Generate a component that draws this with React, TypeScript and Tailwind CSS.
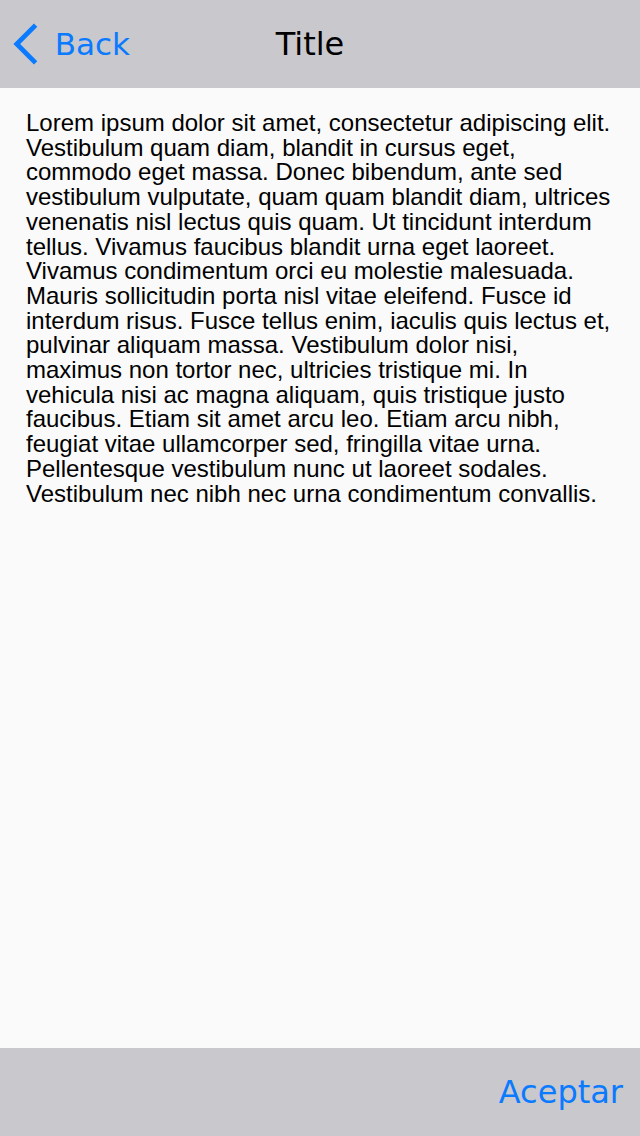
const text =
  "Lorem ipsum dolor sit amet, consectetur adipiscing elit. Vestibulum quam diam, blandit in cursus eget, commodo eget massa. Donec bibendum, ante sed vestibulum vulputate, quam quam blandit diam, ultrices venenatis nisl lectus quis quam. Ut tincidunt interdum tellus. Vivamus faucibus blandit urna eget laoreet. Vivamus condimentum orci eu molestie malesuada. Mauris sollicitudin porta nisl vitae eleifend. Fusce id interdum risus. Fusce tellus enim, iaculis quis lectus et, pulvinar aliquam massa. Vestibulum dolor nisi, maximus non tortor nec, ultricies tristique mi. In vehicula nisi ac magna aliquam, quis tristique justo faucibus. Etiam sit amet arcu leo. Etiam arcu nibh, feugiat vitae ullamcorper sed, fringilla vitae urna. Pellentesque vestibulum nunc ut laoreet sodales. Vestibulum nec nibh nec urna condimentum convallis.";

const App = () => {
  return (
    <div className="h-[1136px] w-[640px] flex flex-col bg-[#fafafa]">
      {/* Nav bar */}
      <header className="h-[88px] shrink-0 flex items-center bg-[#c9c8cd] pl-[12px] pr-[150px] font-['DejaVu_Sans',sans-serif]">
        <button className="w-[118px] flex items-center gap-[17px] text-[#0a7aff]">
          <svg width="27" height="42" viewBox="0 0 27 42" fill="none">
            <polyline points="23,3 5,21 23,39" stroke="#0a7aff" strokeWidth="5" strokeLinecap="square" />
          </svg>
          <span className="text-[31px] leading-none">Back</span>
        </button>
        <h1 className="flex-1 text-center text-[32px] leading-none text-black">Title</h1>
      </header>

      {/* Content */}
      <main className="flex-1 px-[26px] pt-[23px]">
        <p className="text-[24px] leading-[24.7px] text-black font-['Liberation_Sans',Arial,sans-serif]">
          {text}
        </p>
      </main>

      {/* Toolbar */}
      <footer className="h-[88px] shrink-0 flex items-center justify-end bg-[#c9c8cd] pr-[17px] font-['DejaVu_Sans',sans-serif]">
        <button className="text-[32px] leading-none text-[#0a7aff]">Aceptar</button>
      </footer>
    </div>
  );
};

export default App;
